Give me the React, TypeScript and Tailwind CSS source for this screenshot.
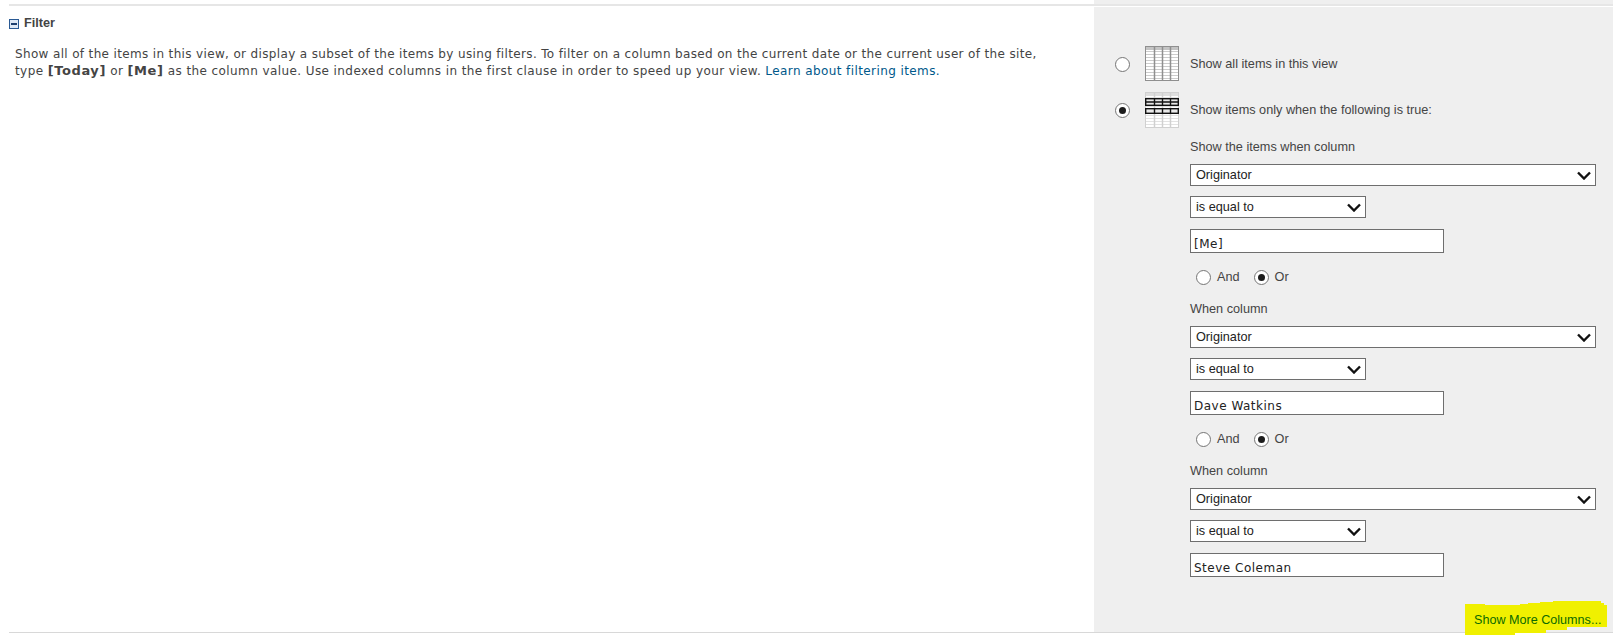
const uiFont = "font-['Liberation_Sans',Arial,sans-serif]";
const verdana = "font-['DejaVu_Sans',Verdana,sans-serif]";

function Radio({ checked = false }: { checked?: boolean }) {
  return (
    <span className="flex h-[15px] w-[15px] shrink-0 items-center justify-center rounded-full border border-[#757575] bg-white">
      {checked ? <span className="h-[7px] w-[7px] rounded-full bg-[#1c1c1c]" /> : null}
    </span>
  );
}

function TableIcon({ highlight = false }: { highlight?: boolean }) {
  const height = highlight ? 36 : 35;
  const grid = highlight ? "#d0d0d0" : "#8f8f8f";
  const rows = Array.from({ length: 10 }, (_, i) => 5 + i * 3);
  return (
    <svg width="34" height={height} viewBox={`0 0 34 ${height}`} className="block shrink-0">
      <rect x="0.5" y="0.5" width="33" height={height - 1} fill="#fff" stroke={grid} />
      <rect x="1" y="1" width="32" height="3" fill={highlight ? "#dedede" : "#c4c4c4"} />
      {rows.map((y) => (
        <line key={y} x1="1" x2="33" y1={y + 0.5} y2={y + 0.5} stroke={highlight ? "#e2e2e2" : "#cccccc"} />
      ))}
      {[9, 17, 25].map((x) => (
        <line key={x} x1={x + 0.5} x2={x + 0.5} y1="1" y2={height - 1} stroke={grid} strokeWidth="1.5" />
      ))}
      {highlight ? (
        <g fill="#e8e8e8" stroke="#111" strokeWidth="1.4">
          <rect x="0.7" y="6.7" width="32.6" height="6.6" />
          <rect x="0.7" y="16.7" width="32.6" height="4.6" />
          <path d="M9.5 6.5v7M17.5 6.5v7M25.5 6.5v7M9.5 17v4.5M17.5 17v4.5M25.5 17v4.5M1 10h32" fill="none" />
        </g>
      ) : null}
    </svg>
  );
}

function SelectBox({ value, className }: { value: string; className: string }) {
  return (
    <div className={`flex h-[22px] items-center justify-between border border-[#6e6e6e] bg-white pl-[5px] pr-[4px] text-[12.7px] text-[#222] ${className}`}>
      <span className="translate-y-px">{value}</span>
      <svg width="14" height="9" viewBox="0 0 14 9" fill="none" stroke="#111" strokeWidth="2.4">
        <path d="M1 1.5l6 6 6-6" />
      </svg>
    </div>
  );
}

function ValueInput({ value }: { value: string }) {
  return (
    <div className={`flex h-[24px] w-[254px] items-end border border-[#6e6e6e] bg-white pl-[3px] text-[12px] leading-[16px] tracking-[0.5px] text-[#222] ${verdana}`}>
      {value}
    </div>
  );
}

function Clause({ label, value, connector = true }: { label: string; value: string; connector?: boolean }) {
  return (
    <div className="flex flex-col">
      <div className="h-[17px] translate-y-px text-[12.7px] leading-[17px] text-[#444]">{label}</div>
      <SelectBox value="Originator" className="mt-[9px] w-[406px]" />
      <SelectBox value="is equal to" className="mt-[10px] w-[176px]" />
      <div className="mt-[11px]">
        <ValueInput value={value} />
      </div>
      {connector ? (
        <div className="mt-[16px] flex h-[16px] items-center pl-[6px] text-[12.7px] text-[#444]">
          <Radio />
          <span className="ml-[6px] translate-y-px">And</span>
          <span className="ml-[14px]"><Radio checked /></span>
          <span className="ml-[6px] translate-y-px">Or</span>
        </div>
      ) : null}
    </div>
  );
}

export default function App() {
  return (
    <div className={`h-[635px] w-[1613px] overflow-hidden bg-white pl-[9px] ${uiFont}`}>
      <div className="ml-auto h-[4px] w-[519px] bg-[#efefef]" />
      <div className="h-[2px] bg-[#e6e6e6]" />
      <div className="mt-px flex h-[626px] border-b border-[#d8d8d8]">
        <div className="w-[1085px] shrink-0">
          <div className="mt-[10px] flex h-[14px] items-center gap-[5px] text-[12.7px] font-bold text-[#444]">
            <svg width="10" height="10" viewBox="0 0 10 10" className="block">
              <rect x="0.5" y="0.5" width="9" height="9" fill="#dfe9f5" stroke="#2a5a94" />
              <path d="M2 5h6" stroke="#1d3f6e" strokeWidth="2" />
            </svg>
            Filter
          </div>
          <p className={`ml-[6px] mt-[15px] whitespace-nowrap text-[12px] leading-[17px] tracking-[0.35px] text-[#444] ${verdana}`}>
            Show all of the items in this view, or display a subset of the items by using filters. To filter on a column based on the current date or the current user of the site,
            <br />
            <span className="tracking-[0.41px]">
              type <b className="text-[13px] leading-none tracking-[0.6px]">[Today]</b> or <b className="text-[13px] leading-none tracking-[0.6px]">[Me]</b> as the column value. Use indexed columns in the first clause in order to speed up your view. <span className="text-[#00588a]">Learn about filtering items.</span>
            </span>
          </p>
        </div>
        <div className="relative flex-1 bg-[#efefef] pl-[21px] pt-[39px]">
          <div className="flex h-[37px] items-center text-[12.7px] text-[#444]">
            <Radio />
            <span className="ml-[15px] self-start"><TableIcon /></span>
            <span className="ml-[11px]">Show all items in this view</span>
          </div>
          <div className="mt-[9px] flex h-[37px] items-center text-[12.7px] text-[#444]">
            <Radio checked />
            <span className="ml-[15px] self-start"><TableIcon highlight /></span>
            <span className="ml-[11px]">Show items only when the following is true:</span>
          </div>
          <div className="ml-[75px] mt-[9px] flex flex-col gap-[15px]">
            <Clause label="Show the items when column" value="[Me]" />
            <Clause label="When column" value="Dave Watkins" />
            <Clause label="When column" value="Steve Coleman" connector={false} />
          </div>
          <div className="absolute left-[371px] top-[594px] h-[34px] w-[142px]">
            <svg width="142" height="34" viewBox="0 0 142 34" className="absolute inset-0 block">
              <path d="M0 3H20V4H55V3H63V2H75V1H88V0H136V2H139V4H142V26H102V29H81V32H50V34H0Z" fill="#f0f000" />
            </svg>
            <span className="absolute left-[9px] top-[11px] whitespace-nowrap text-[12.6px] leading-[16px] text-[#0b6a00]">Show More Columns...</span>
          </div>
        </div>
      </div>
    </div>
  );
}
